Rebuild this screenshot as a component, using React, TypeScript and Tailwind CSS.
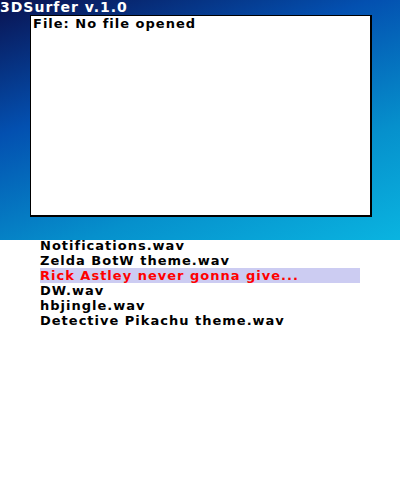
import React from "react";

const files = [
  "Notifications.wav",
  "Zelda BotW theme.wav",
  "Rick Astley never gonna give...",
  "DW.wav",
  "hbjingle.wav",
  "Detective Pikachu theme.wav",
];

export default function App() {
  return (
    <div
      className="w-[400px] h-[480px] bg-white overflow-hidden"
      style={{ fontFamily: '"DejaVu Sans", sans-serif' }}
    >
      <div className="relative w-[400px] h-[240px] bg-[linear-gradient(160deg,#0a1250_0%,#0350b0_35%,#0690cc_70%,#0ab4e0_100%)] pt-[15px] pl-[30px]">
        <div className="absolute left-0 top-0 text-white text-[14px] font-bold leading-[15px] tracking-[1px]">
          3DSurfer v.1.0
        </div>
        <div className="w-[342px] h-[202px] bg-white border-l border-t border-r-2 border-b-2 border-black pl-[2px] pt-[1px]">
          <div className="text-black text-[13px] font-bold leading-[14px] tracking-[1px]">
            File: No file opened
          </div>
        </div>
      </div>
      <div className="pl-[40px] mt-[-2px] flex flex-col">
        {files.map((f, i) => (
          <div
            key={f}
            className={
              i === 2
                ? "w-[320px] h-[15px] bg-[#ccccf2] text-[#ff0000] text-[13px] font-bold leading-[15px] tracking-[1px] whitespace-nowrap"
                : "w-[320px] h-[15px] text-black text-[13px] font-bold leading-[15px] tracking-[1px] whitespace-nowrap"
            }
          >
            {f}
          </div>
        ))}
      </div>
    </div>
  );
}
